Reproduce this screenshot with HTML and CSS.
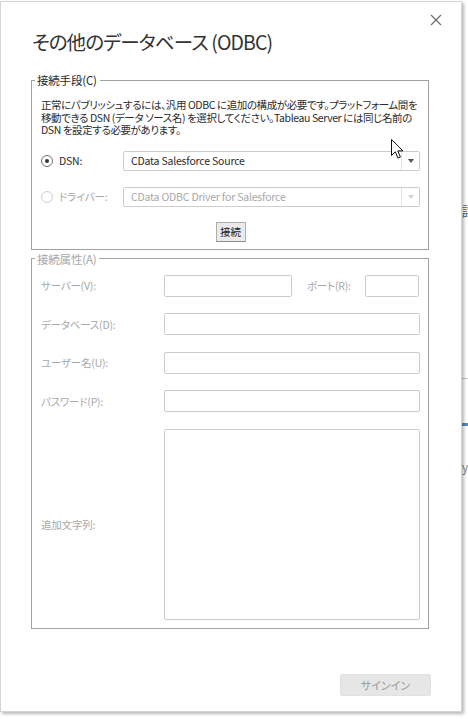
FILE: index.html
```html
<!DOCTYPE html>
<html lang="ja">
<head>
  <meta charset="UTF-8">
  <meta name="viewport" content="width=device-width, initial-scale=1.0">
  <title>その他のデータベース (ODBC)</title>
  <link rel="stylesheet" href="styles.css">
</head>
<body>
  <!-- page behind the dialog, only its right edge shows -->
  <div class="page">
    <div class="side">
      <div class="side-title">詳</div>
      <div class="side-rule"></div>
      <div class="side-tab"></div>
      <div class="side-text">y</div>
    </div>
  </div>

  <div class="dialog">
    <button class="close-btn" aria-label="閉じる">
      <svg width="12" height="12" viewBox="0 0 12 12">
        <path d="M1 1 L11 11 M11 1 L1 11" stroke="#6a6a6a" stroke-width="1.1" fill="none"/>
      </svg>
    </button>

    <h1 class="dialog-title">その他のデータベース (ODBC)</h1>

    <!-- Connection method -->
    <fieldset class="group">
      <legend>接続手段(C)</legend>
      <p class="note">正常にパブリッシュするには、汎用 ODBC に追加の構成が必要です。プラットフォーム間を<br>移動できる DSN (データ ソース名) を選択してください。Tableau Server には同じ名前の<br>DSN を設定する必要があります。</p>

      <div class="option">
        <span class="radio checked"></span>
        <span class="option-label">DSN:</span>
        <div class="select">
          <span class="select-value">CData Salesforce Source</span>
          <span class="select-arrow"></span>
        </div>
      </div>

      <div class="option disabled">
        <span class="radio"></span>
        <span class="option-label">ドライバー:</span>
        <div class="select">
          <span class="select-value">CData ODBC Driver for Salesforce</span>
          <span class="select-arrow"></span>
        </div>
      </div>

      <div class="connect-row">
        <button class="connect-btn">接続</button>
      </div>
    </fieldset>

    <!-- Connection attributes -->
    <fieldset class="group disabled">
      <legend>接続属性(A)</legend>
      <div class="form-grid">
        <label>サーバー(V):</label>
        <div class="server-row">
          <input class="server-input" type="text" disabled>
          <label class="port-label">ポート(R):</label>
          <input class="port-input" type="text" disabled>
        </div>

        <label>データベース(D):</label>
        <input type="text" disabled>

        <label>ユーザー名(U):</label>
        <input type="text" disabled>

        <label>パスワード(P):</label>
        <input type="password" disabled>

        <label>追加文字列:</label>
        <textarea disabled></textarea>
      </div>
    </fieldset>

    <div class="dialog-footer">
      <button class="signin-btn" disabled>サインイン</button>
    </div>

    <!-- mouse pointer -->
    <svg class="pointer" width="14" height="21" viewBox="0 0 14 21">
      <path d="M0.5 0.5 L0.5 16.5 L4.3 12.8 L6.9 19 L9.4 18 L6.8 11.9 L12 11.9 Z" fill="#fff" stroke="#111" stroke-width="1"/>
    </svg>
  </div>
</body>
</html>
```

FILE: styles.css
```css
:root {
  --text-color: #2b2b2b;
  --muted-color: #a8a8a8;
  --group-border: #a0a0a0;
  --field-border: #cdcdcd;
}

* {
  box-sizing: border-box;
  margin: 0;
  padding: 0;
}

body {
  width: 468px;
  height: 719px;
  overflow: hidden;
  background-color: #fff;
  font-family: "Noto Sans CJK JP", "Noto Sans", sans-serif;
  font-feature-settings: "palt";
  font-size: 10.5px;
  letter-spacing: -0.2px;
  color: var(--text-color);
  position: relative;
}

/* background page */
.page {
  height: 100%;
  padding-left: 462px;
}

.side {
  padding-top: 204px;
}

.side-title {
  font-size: 13px;
  line-height: 14px;
  color: #5a5a5a;
  white-space: nowrap;
}

.side-rule {
  margin-top: 160px;
  border-top: 1px solid #c4c4c4;
}

.side-tab {
  margin-top: 44px;
  height: 3px;
  background-color: #5a8ab5;
}

.side-text {
  margin-top: 32px;
  color: #888;
  font-size: 12px;
}

/* dialog */
.dialog {
  position: absolute;
  left: 0;
  top: 1px;
  width: 462px;
  height: 711px;
  background-color: #fff;
  border: 1px solid #d4d4d4;
  box-shadow: 2px 2px 3px rgba(0, 0, 0, 0.28);
  padding: 0 32px 0 30px;
}

.close-btn {
  position: absolute;
  top: 12px;
  right: 19px;
  border: none;
  background: none;
  width: 12px;
  height: 12px;
  display: flex;
}

.dialog-title {
  margin-top: 25px;
  margin-left: 1px;
  font-size: 19.5px;
  letter-spacing: -0.9px;
  line-height: 30px;
  font-weight: 400;
  color: #333;
  white-space: nowrap;
}

.group {
  border: 1px solid var(--group-border);
  padding: 0 8px 7px 9px;
  min-width: 0;
}

.group:first-of-type {
  margin-top: 15px;
}

.group + .group {
  margin-top: 1px;
  padding-bottom: 8px;
}

.group legend {
  margin-left: -6px;
  padding: 0 3px 0 2px;
  font-size: 11.5px;
  line-height: 16px;
}

.group.disabled legend,
.group.disabled label {
  color: var(--muted-color);
}

.note {
  margin-top: 11px;
  font-size: 10.5px;
  line-height: 12.5px;
  letter-spacing: -0.4px;
  white-space: nowrap;
}

.option {
  display: flex;
  align-items: center;
  height: 20px;
  margin-top: 14px;
}

.option + .option {
  margin-top: 16px;
}

.radio {
  width: 12px;
  height: 12px;
  border: 1px solid #6f6f6f;
  border-radius: 50%;
  display: flex;
  align-items: center;
  justify-content: center;
}

.radio.checked::after {
  content: "";
  width: 4px;
  height: 4px;
  border-radius: 50%;
  background-color: #333;
}

.option.disabled .radio {
  border-color: #cfcfcf;
}

.option-label {
  margin-left: 6px;
  width: 64px;
}

.option.disabled .option-label,
.option.disabled .select-value {
  color: var(--muted-color);
}

.select {
  flex: 1;
  height: 20px;
  display: flex;
  border: 1px solid var(--field-border);
  border-radius: 2px;
}

.select-value {
  flex: 1;
  padding-left: 7px;
  line-height: 18px;
}

.select-arrow {
  width: 18px;
  border-left: 1px solid #e2e2e2;
  display: flex;
  align-items: center;
  justify-content: center;
}

.select-arrow::after {
  content: "";
  border-left: 3.5px solid transparent;
  border-right: 3.5px solid transparent;
  border-top: 4px solid #555;
}

.option.disabled .select-arrow::after {
  border-top-color: #d0d0d0;
}

.connect-row {
  display: flex;
  justify-content: center;
  margin-top: 15px;
}

.connect-btn {
  width: 30px;
  height: 20px;
  font: inherit;
  color: #222;
  background-color: #eaeaea;
  border: 1px solid #adadad;
  border-bottom-color: #8f8f8f;
}

.form-grid {
  display: grid;
  grid-template-columns: 123px 1fr;
  grid-template-rows: repeat(4, 22px) 191px;
  row-gap: 16.5px;
  align-items: center;
  margin-top: 8px;
}

.form-grid input,
.form-grid textarea {
  height: 22px;
  width: 100%;
  border: 1px solid var(--field-border);
  border-radius: 2px;
  background-color: #fff;
  resize: none;
}

.form-grid textarea {
  height: 191px;
}

.server-row {
  display: flex;
  align-items: center;
}

.server-row .server-input {
  width: 128px;
}

.port-label {
  margin-left: 15px;
  width: 58px;
}

.server-row .port-input {
  width: 54px;
}

.dialog-footer {
  display: flex;
  justify-content: flex-end;
  margin-top: 45px;
  margin-right: -2px;
}

.signin-btn {
  width: 91px;
  height: 22px;
  font: inherit;
  font-size: 11px;
  color: #9b9b9b;
  background-color: #e6e6e6;
  border: 1px solid #e1e1e1;
  border-radius: 2px;
}

.pointer {
  position: absolute;
  left: 390px;
  top: 137px;
}
```
